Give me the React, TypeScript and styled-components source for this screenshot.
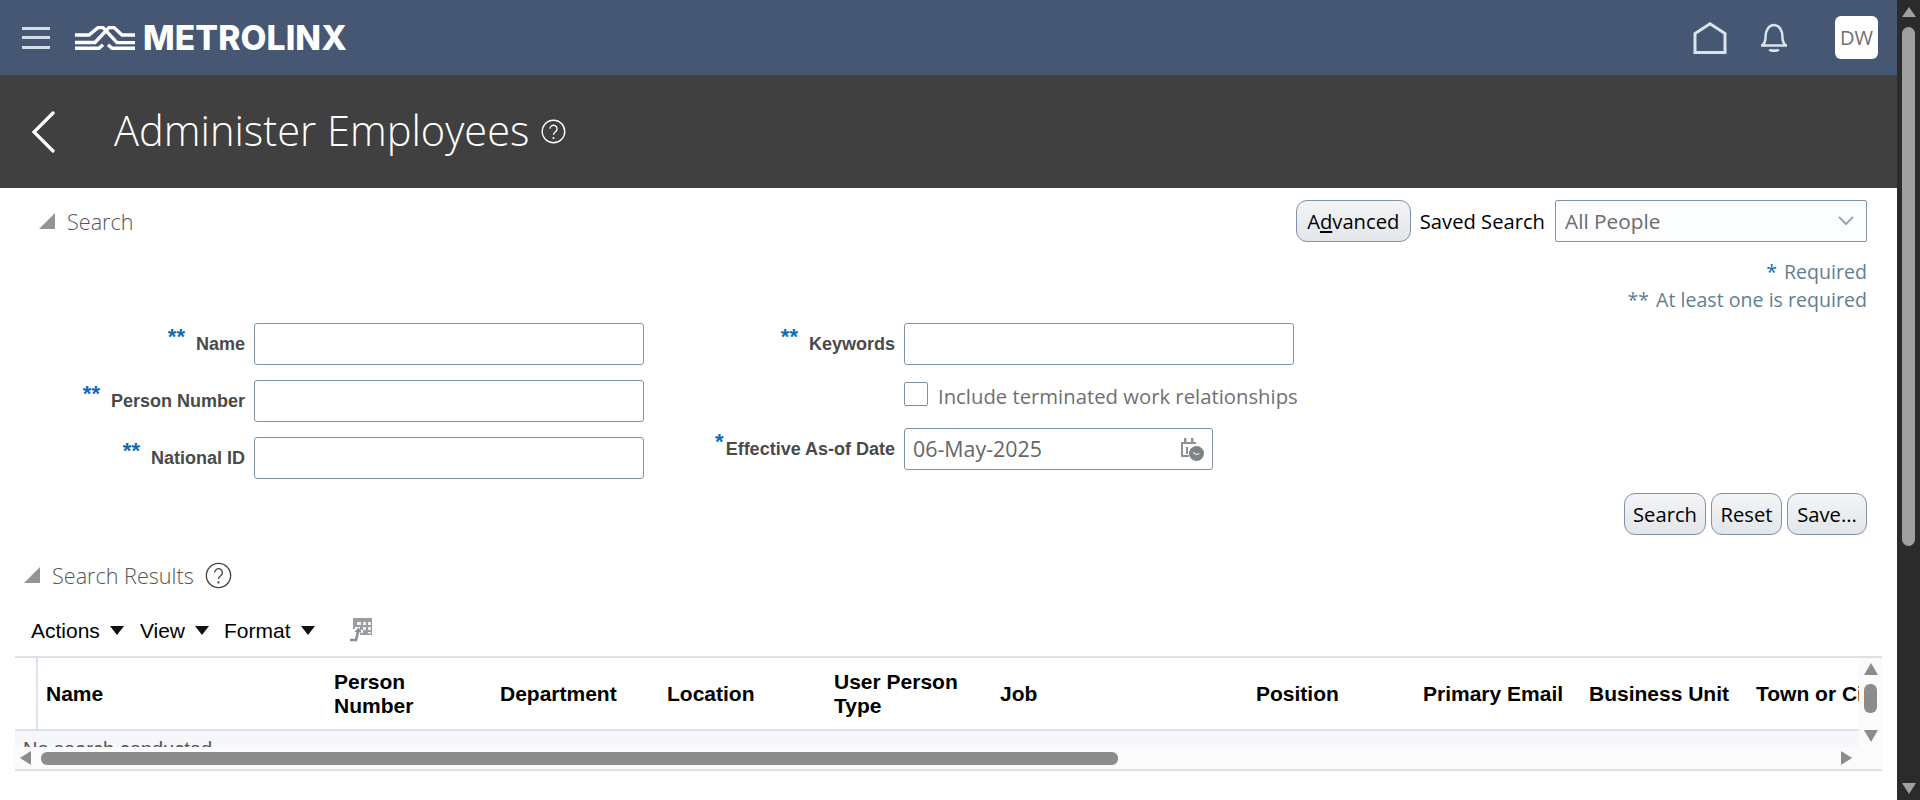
import React from "react";
import styled, { createGlobalStyle } from "styled-components";

const Global = createGlobalStyle`
  html, body { margin: 0; padding: 0; height: 100%; overflow: hidden; background: #fff; }
  * { box-sizing: border-box; }
`;

const ui = `"Open Sans", "Noto Sans", sans-serif`;
const arial = `"Liberation Sans", Arial, sans-serif`;

const Page = styled.div`
  display: flex;
  width: 1920px;
  height: 800px;
  overflow: hidden;
`;
const Main = styled.main`
  width: 1897px;
  flex: none;
  display: flex;
  flex-direction: column;
`;
const TopBar = styled.header`
  height: 75px;
  background: #465773;
  display: flex;
  align-items: center;
  padding: 0 19px 0 22px;
`;
const Burger = styled.div`
  width: 28px;
  display: flex;
  flex-direction: column;
  gap: 6.5px;
  margin-right: 25px;
  & > span { display: block; height: 3px; background: #d5dde8; }
`;
const LogoText = styled.span`
  font: 800 33.6px/1 Inter, sans-serif;
  color: #fff;
  margin-left: 8px;
  letter-spacing: 0.1px;
`;
const TopRight = styled.div`
  margin-left: auto;
  display: flex;
  align-items: center;
`;
const Avatar = styled.div`
  width: 43px;
  height: 43px;
  border-radius: 6px;
  background: #fff;
  color: #707070;
  font: 400 20px/43px ${ui};
  text-align: center;
  margin-left: 48px;
`;
const TitleBar = styled.div`
  height: 113px;
  background: #404040;
  display: flex;
  align-items: center;
  padding-left: 32px;
  color: #fff;
`;
const Title = styled.h1`
  margin: -2px 12px 0 58px;
  font: 300 41.6px/1 ${ui};
  letter-spacing: 0;
  color: #fff;
`;
const Content = styled.div`
  flex: 1;
  display: flex;
  flex-direction: column;
  padding: 12px 0 0 15px;
  min-height: 0;
`;
const SearchTop = styled.div`
  display: flex;
  align-items: center;
  height: 42px;
  padding: 0 30px 0 24px;
`;
const Disclosure = styled.div`
  width: 0;
  height: 0;
  border-style: solid;
  border-width: 0 0 16px 16px;
  border-color: transparent transparent #90959a transparent;
  flex: none;
`;
const SectionTitle = styled.span<{ $dx: number }>`
  font: 300 21.6px/1 ${ui};
  color: #555;
  margin: 1px 0 0 ${(p) => p.$dx}px;
`;
const SavedGroup = styled.div`
  margin-left: auto;
  display: flex;
  align-items: center;
`;
const Btn = styled.button<{ $w: number }>`
  width: ${(p) => p.$w}px;
  height: 42px;
  padding: 0;
  border: 1px solid #7f93a5;
  border-radius: 11px;
  background: linear-gradient(#f3f4f6, #e2e6ea);
  font: 500 20.2px/1 ${ui};
  color: #000;
  & u { text-underline-offset: 2px; }
`;
const SavedLabel = styled.span`
  font: 500 20.2px/1 ${ui};
  color: #000;
  margin: 0 10px 0 9px;
`;
const Select = styled.div`
  width: 312px;
  height: 42px;
  border: 1px solid #7f93a5;
  border-radius: 2px;
  background: #fcfdfe;
  display: flex;
  align-items: center;
  justify-content: space-between;
  padding: 0 12px 0 9px;
  font: 400 20.8px/1 ${ui};
  color: #6b6b6b;
`;
const ReqBlock = styled.div`
  margin: 16px 30px 0 0;
  text-align: right;
  font: 400 19.6px/28px ${ui};
  color: #5f7f92;
  height: 56px;
`;
const ReqStar = styled.span`
  color: #0b6cb8;
  margin-right: 7px;
`;
const ReqStarMuted = styled.span`
  margin-right: 7px;
`;
const Form = styled.div`
  display: flex;
  margin-top: 9px;
  height: 156px;
`;
const Col = styled.div<{ $w: number }>`
  width: ${(p) => p.$w}px;
  flex: none;
  display: flex;
  flex-direction: column;
`;
const Row = styled.div<{ $mt?: number; $gap?: number }>`
  display: flex;
  align-items: center;
  justify-content: flex-end;
  gap: ${(p) => p.$gap ?? 9}px;
  margin-top: ${(p) => p.$mt ?? 0}px;
`;
const Label = styled.label`
  font: 700 18px/1 ${arial};
  color: #4a4a4a;
  flex: none;
  padding-bottom: 2px;
`;
const Stars = styled.span<{ $gap?: number }>`
  font: 700 22px/1 ${arial};
  color: #0b6cb8;
  margin-right: ${(p) => p.$gap ?? 11}px;
  position: relative;
  top: -6px;
`;
const Input = styled.div<{ $w: number }>`
  width: ${(p) => p.$w}px;
  height: 42px;
  flex: none;
  border: 1px solid #7f93a5;
  border-radius: 3px;
  background: #fff;
`;
const DateInput = styled(Input)`
  display: flex;
  align-items: center;
  justify-content: space-between;
  padding: 0 8px 0 8px;
  font: 400 21.4px/1 ${ui};
  color: #666;
`;
const DateInputWrap = styled.div`
  width: 390px;
  flex: none;
`;
const Check = styled.div`
  width: 24px;
  height: 24px;
  border: 1px solid #7f93a5;
  border-radius: 2px;
  flex: none;
`;
const CheckText = styled.span`
  font: 500 20.3px/1 ${ui};
  color: #707070;
  margin: 4px 0 0 10px;
  white-space: nowrap;
`;
const CheckRow = styled.div`
  display: flex;
  align-items: center;
  margin: 17px 0 0 260px;
  height: 24px;
`;
const Actions = styled.div`
  display: flex;
  justify-content: flex-end;
  gap: 5px;
  padding-right: 30px;
  margin-top: 14px;
`;
const ResultsHead = styled.div`
  display: flex;
  align-items: center;
  height: 26px;
  margin-top: 27px;
  padding-left: 9px;
`;
const HelpGap = styled.span`
  margin-left: 11px;
  display: inline-flex;
`;
const Toolbar = styled.div`
  display: flex;
  align-items: center;
  height: 24px;
  margin-top: 30px;
  padding-left: 16px;
`;
const Menu = styled.span<{ $mr: number }>`
  display: inline-flex;
  align-items: center;
  font: 400 21px/1 ${arial};
  color: #000;
  margin-right: ${(p) => p.$mr}px;
  &::after {
    content: "";
    margin-left: 10px;
    border-style: solid;
    border-width: 9px 7.5px 0 7.5px;
    border-color: #111 transparent transparent transparent;
  }
`;
const Table = styled.div`
  width: 1867px;
  margin-top: 14px;
  border-top: 2px solid #dbe1e8;
  border-bottom: 2px solid #dbe1e8;
`;
const TableBody = styled.div`
  display: flex;
  height: 89px;
`;
const TableMain = styled.div`
  width: 1844px;
  flex: none;
  overflow: hidden;
`;
const HeadRow = styled.div`
  display: flex;
  height: 73px;
  border-bottom: 2px solid #dbe1e8;
`;
const Spacer = styled.div`
  width: 23px;
  flex: none;
  border-right: 2px solid #dbe1e8;
`;
const Th = styled.div<{ $w: number }>`
  width: ${(p) => p.$w}px;
  flex: none;
  padding-left: 8px;
  display: flex;
  align-items: center;
  font: 700 21px/24px ${arial};
  color: #000;
  white-space: nowrap;
`;
const ClippedHead = styled.div`
  width: 103px;
  overflow: hidden;
`;
const DataRow = styled.div`
  height: 16px;
  background: #f5f7fb;
  overflow: hidden;
  padding: 6px 0 0 8px;
  font: 400 20px/24px ${arial};
  color: #555;
`;
const VScroll = styled.div`
  width: 23px;
  flex: none;
  background: #fbfbfb;
  display: flex;
  flex-direction: column;
  align-items: center;
  padding-top: 5px;
`;
const Arrow = styled.div<{ $dir: "up" | "down" | "left" | "right" }>`
  width: 0;
  height: 0;
  flex: none;
  border-style: solid;
  border-color: transparent;
  ${(p) =>
    p.$dir === "up"
      ? "border-width: 0 7px 12px 7px; border-bottom-color: #8c8c8c;"
      : p.$dir === "down"
      ? "border-width: 12px 7px 0 7px; border-top-color: #8c8c8c;"
      : p.$dir === "left"
      ? "border-width: 7px 11px 7px 0; border-right-color: #8c8c8c;"
      : "border-width: 7px 0 7px 11px; border-left-color: #8c8c8c;"}
`;
const VThumb = styled.div`
  width: 13px;
  height: 29px;
  margin: 9px 0 17px;
  border-radius: 6px;
  background: #8c8c8c;
`;
const HScroll = styled.div`
  height: 22px;
  background: #fbfbfb;
  display: flex;
  align-items: center;
  padding-left: 5px;
`;
const HThumb = styled.div`
  width: 1077px;
  height: 13px;
  margin: 0 723px 0 10px;
  border-radius: 6px;
  background: #8c8c8c;
  flex: none;
`;
const WinScroll = styled.aside`
  width: 23px;
  flex: none;
  height: 800px;
  background: #2b2b2b;
  display: flex;
  flex-direction: column;
  align-items: center;
  padding-top: 7px;
`;
const WinThumb = styled.div`
  width: 13px;
  height: 519px;
  margin-top: 10px;
  border-radius: 7px;
  background: #9f9f9f;
`;
const WinArrow = styled.div<{ $down?: boolean }>`
  width: 0;
  height: 0;
  flex: none;
  border-style: solid;
  border-color: transparent;
  ${(p) =>
    p.$down
      ? "border-width: 11px 7.5px 0 7.5px; border-top-color: #a0a0a0; margin-top: 237px;"
      : "border-width: 0 7.5px 10px 7.5px; border-bottom-color: #a0a0a0;"}
`;

const Logo = () => (
  <svg width="60" height="24" viewBox="0 0 60 24" fill="none" stroke="#fff" strokeWidth="3.4" style={{ flex: "none" }}>
    <path d="M0 9h14L23 1.600h5l14 15h18" />
    <path d="M0 16.500h20L34 1.600h5L47 9h13" />
    <path d="M0 22.300h24l4-3.500M33 18.800l4 3.500h23" />
  </svg>
);
const Help = ({ size, color, w }: { size: number; color: string; w: number }) => (
  <svg width={size} height={size} viewBox="0 0 24 24" fill="none" stroke={color} strokeWidth={w} style={{ flex: "none" }}>
    <circle cx="12" cy="12" r="10.800" />
    <path d="M8.600 9.400a3.400 3.400 0 1 1 5.300 2.800c-1.300.8-1.900 1.500-1.900 3" strokeWidth={w} />
    <circle cx="12" cy="18.200" r="1" fill={color} stroke="none" />
  </svg>
);
const Home = () => (
  <svg width="34" height="32" viewBox="0 0 34 32" fill="none" stroke="#dbe3ec" strokeWidth="3" style={{ flex: "none" }}>
    <path d="M2 30.500V11.500L17 1.800l15 9.700v19z" />
  </svg>
);
const Bell = () => (
  <svg width="26" height="30" viewBox="0 0 26 30" fill="none" stroke="#dbe3ec" strokeWidth="2.500" style={{ flex: "none", marginLeft: 34 }}>
    <path d="M1 22.400c3-2 3.600-4.600 3.600-9 0-6 3.200-11.400 8.400-11.400s8.400 5.400 8.400 11.400c0 4.400.6 7 3.600 9z" />
    <path d="M8.400 26.500c1.200 1.600 8 1.600 9.200 0" strokeWidth="2.800" />
  </svg>
);
const Chevron = () => (
  <svg width="24" height="42" viewBox="0 0 24 42" fill="none" stroke="#fff" strokeWidth="3.200" strokeLinecap="round" style={{ flex: "none" }}>
    <path d="M21 2L2 21l19 19" />
  </svg>
);
const SelectChevron = () => (
  <svg width="16" height="10" viewBox="0 0 16 10" fill="none" stroke="#9aa5ad" strokeWidth="2">
    <path d="M1 1l7 7 7-7" />
  </svg>
);
const Calendar = () => (
  <svg width="24" height="24" viewBox="0 0 24 24" style={{ flex: "none" }}>
    <path d="M1 5h15v2H3v11h6v2H1zM4 1h2.500v5H4zM11 1h2.500v5H11z" fill="#8d9196" />
    <path d="M6 10h2v7H6z" fill="#8d9196" />
    <circle cx="16.500" cy="16.500" r="7.500" fill="#7e8388" />
    <path d="M13 15.500l3.500 2 3-1" stroke="#e8e8e8" strokeWidth="1.300" fill="none" />
  </svg>
);
const Detach = () => (
  <svg width="24" height="24" viewBox="0 0 24 24" style={{ flex: "none", marginLeft: 34 }}>
    <path d="M4 0h19v17H11v-2h3v-3h-3V9H6v2H4z" fill="#9a9ea3" />
    <path d="M8 4h4v3H8zM14 4h3v3h-3zM19 4h3v3h-3zM14 9h3v3h-3zM19 9h3v3h-3zM19 14h3v1.500h-3z" fill="#eef0f2" />
    <path d="M1 22h6l2-8" stroke="#8a8f94" strokeWidth="2.600" fill="none" />
    <path d="M5.500 14l4-4.500 3.500 5z" fill="#8a8f94" />
  </svg>
);

const columns: [string, number][] = [
  ["Name", 288],
  ["Person Number", 166],
  ["Department", 167],
  ["Location", 167],
  ["User Person Type", 166],
  ["Job", 256],
  ["Position", 167],
  ["Primary Email", 166],
  ["Business Unit", 167],
  ["Town or City", 112],
];

function headerText(t: string) {
  if (t === "Person Number") return <div>Person<br />Number</div>;
  if (t === "User Person Type") return <div>User Person<br />Type</div>;
  if (t === "Town or City") return <ClippedHead>Town or City</ClippedHead>;
  return t;
}

export default function App() {
  return (
    <Page>
      <Global />
      <Main>
        <TopBar>
          <Burger>
            <span />
            <span />
            <span />
          </Burger>
          <Logo />
          <LogoText>METROLINX</LogoText>
          <TopRight>
            <Home />
            <Bell />
            <Avatar>DW</Avatar>
          </TopRight>
        </TopBar>
        <TitleBar>
          <Chevron />
          <Title>Administer Employees</Title>
          <Help size={25} color="#fff" w={1.3} />
        </TitleBar>
        <Content>
          <SearchTop>
            <Disclosure />
            <SectionTitle $dx={12}>Search</SectionTitle>
            <SavedGroup>
              <Btn $w={115}>
                A<u>d</u>vanced
              </Btn>
              <SavedLabel>Saved Search</SavedLabel>
              <Select>
                All People
                <SelectChevron />
              </Select>
            </SavedGroup>
          </SearchTop>
          <ReqBlock>
            <div>
              <ReqStar>*</ReqStar>Required
            </div>
            <div>
              <ReqStarMuted>**</ReqStarMuted>At least one is required
            </div>
          </ReqBlock>
          <Form>
            <Col $w={629}>
              <Row>
                <Label>
                  <Stars>**</Stars>Name
                </Label>
                <Input $w={390} />
              </Row>
              <Row $mt={15}>
                <Label>
                  <Stars>**</Stars>Person Number
                </Label>
                <Input $w={390} />
              </Row>
              <Row $mt={15}>
                <Label>
                  <Stars>**</Stars>National ID
                </Label>
                <Input $w={390} />
              </Row>
            </Col>
            <Col $w={650}>
              <Row>
                <Label>
                  <Stars>**</Stars>Keywords
                </Label>
                <Input $w={390} />
              </Row>
              <CheckRow>
                <Check />
                <CheckText>Include terminated work relationships</CheckText>
              </CheckRow>
              <Row $mt={22}>
                <Label>
                  <Stars $gap={2}>*</Stars>Effective As-of Date
                </Label>
                <DateInputWrap>
                  <DateInput $w={309}>
                    06-May-2025
                    <Calendar />
                  </DateInput>
                </DateInputWrap>
              </Row>
            </Col>
          </Form>
          <Actions>
            <Btn $w={82}>Search</Btn>
            <Btn $w={71}>Reset</Btn>
            <Btn $w={80}>Save...</Btn>
          </Actions>
          <ResultsHead>
            <Disclosure />
            <SectionTitle $dx={12}>Search Results</SectionTitle>
            <HelpGap>
              <Help size={27} color="#444" w={1.2} />
            </HelpGap>
          </ResultsHead>
          <Toolbar>
            <Menu $mr={16}>Actions</Menu>
            <Menu $mr={15}>View</Menu>
            <Menu $mr={0}>Format</Menu>
            <Detach />
          </Toolbar>
          <Table>
            <TableBody>
              <TableMain>
                <HeadRow>
                  <Spacer />
                  {columns.map(([t, w]) => (
                    <Th key={t} $w={w}>
                      {headerText(t)}
                    </Th>
                  ))}
                </HeadRow>
                <DataRow>No search conducted</DataRow>
              </TableMain>
              <VScroll>
                <Arrow $dir="up" />
                <VThumb />
                <Arrow $dir="down" />
              </VScroll>
            </TableBody>
            <HScroll>
              <Arrow $dir="left" />
              <HThumb />
              <Arrow $dir="right" />
            </HScroll>
          </Table>
        </Content>
      </Main>
      <WinScroll>
        <WinArrow />
        <WinThumb />
        <WinArrow $down />
      </WinScroll>
    </Page>
  );
}
